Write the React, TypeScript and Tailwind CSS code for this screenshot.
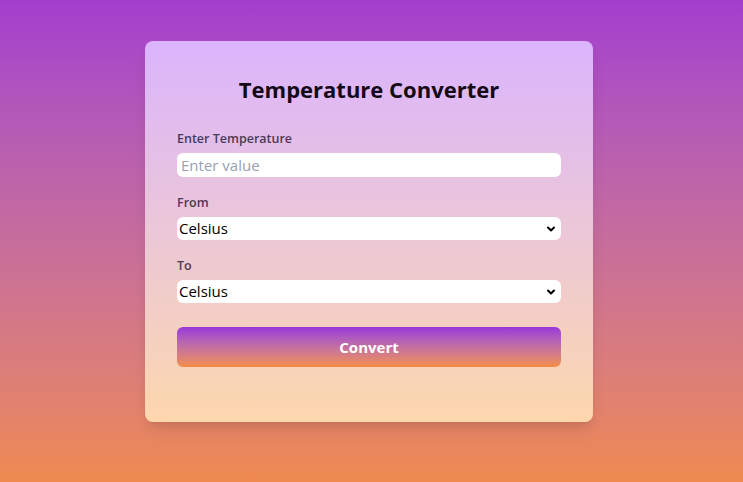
import { ChevronDown } from 'lucide-react'

const units = ['Celsius', 'Fahrenheit', 'Kelvin']

function Field({ label, children }: { label: string; children: React.ReactNode }) {
  return (
    <div className="mb-4">
      <label className="block text-[12.5px] leading-5 font-semibold text-[#4a3a5a] mb-1">{label}</label>
      {children}
    </div>
  )
}

function UnitSelect() {
  return (
    <div className="relative">
      <select className="block w-full h-[23px] appearance-none bg-white rounded-md px-0.5 text-[15px] leading-[23px] text-black outline-none">
        {units.map((u) => (
          <option key={u}>{u}</option>
        ))}
      </select>
      <ChevronDown
        size={12}
        strokeWidth={4}
        className="absolute right-[4px] top-1/2 -translate-y-1/2 text-black pointer-events-none"
      />
    </div>
  )
}

export default function App() {
  return (
    <div
      className="min-h-screen bg-gradient-to-b from-[#a43dcf] to-[#ef8a4f] flex justify-center pt-[41px] pr-[5px]"
      style={{ fontFamily: '"Open Sans", sans-serif' }}
    >
      <div className="w-[448px] h-[381px] bg-gradient-to-b from-[#dbb4fc] to-[#fdd7ac] rounded-lg shadow-lg p-8">
        <h1 className="text-[22px] leading-8 font-bold text-center text-[#140a18] mb-6">Temperature Converter</h1>

        <Field label="Enter Temperature">
          <input
            type="text"
            placeholder="Enter value"
            className="block w-full h-6 bg-white rounded-md px-1 text-[15px] leading-6 placeholder:text-gray-400 outline-none"
          />
        </Field>

        <Field label="From">
          <UnitSelect />
        </Field>

        <Field label="To">
          <UnitSelect />
        </Field>

        <button className="mt-2 w-full h-10 rounded-md bg-gradient-to-b from-[#9a34dc] to-[#f58e41] text-white text-[15px] font-bold">
          Convert
        </button>
      </div>
    </div>
  )
}
